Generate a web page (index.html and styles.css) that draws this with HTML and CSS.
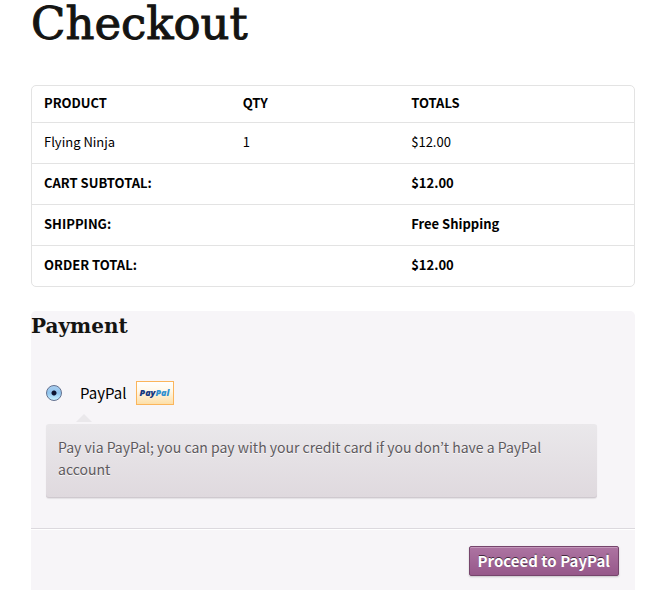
FILE: index.html
```html
<!DOCTYPE html>
<html lang="en">
<head>
<meta charset="UTF-8">
<title>Checkout</title>
<link rel="stylesheet" href="styles.css">
</head>
<body>
  <main class="checkout">
    <h1 class="page-title">Checkout</h1>

    <div class="order">
      <table class="order-table">
        <thead>
          <tr>
            <th class="col-product">Product</th>
            <th class="col-qty">Qty</th>
            <th>Totals</th>
          </tr>
        </thead>
        <tbody>
          <tr>
            <td>Flying Ninja</td>
            <td>1</td>
            <td>$12.00</td>
          </tr>
        </tbody>
        <tfoot>
          <tr>
            <th colspan="2">Cart Subtotal:</th>
            <td>$12.00</td>
          </tr>
          <tr>
            <th colspan="2">Shipping:</th>
            <td>Free Shipping</td>
          </tr>
          <tr>
            <th colspan="2">Order Total:</th>
            <td>$12.00</td>
          </tr>
        </tfoot>
      </table>
    </div>

    <form class="payment">
      <h2 class="payment-title">Payment</h2>
      <div class="methods">
        <div class="method">
          <input type="radio" class="radio" id="paypal" name="payment_method" value="paypal" checked>
          <label class="method-label" for="paypal">
            PayPal
            <span class="paypal-logo" aria-hidden="true"><span class="pay">Pay</span><span class="pal">Pal</span></span>
          </label>
        </div>
        <div class="payment-box">Pay via PayPal; you can pay with your credit card if you don’t have a PayPal account</div>
      </div>
      <div class="place-order">
        <button type="submit" class="button">Proceed to PayPal</button>
      </div>
    </form>
  </main>
</body>
</html>
```

FILE: styles.css
```css
* {
  box-sizing: border-box;
}

body {
  margin: 0;
  background: #fff;
  color: #141412;
  font-family: "Noto Sans CJK KR", "Open Sans", sans-serif;
}

.checkout {
  padding: 0 30px 0 31px;
}

.page-title {
  margin: 0 0 37px;
  font-family: "DejaVu Serif", serif;
  font-size: 45px;
  font-weight: 400;
  line-height: 48px;
  -webkit-text-stroke: 1px #141412;
}

/* order table */
.order {
  border: 1px solid #e3e3e3;
  border-radius: 5px;
}

.order-table {
  width: 100%;
  border-spacing: 0;
  table-layout: fixed;
  font-size: 13px;
  line-height: 20px;
  color: #000;
}

.order-table th,
.order-table td {
  padding: 9px 12px 11px;
  text-align: left;
  border-top: 1px solid #e3e3e3;
}

.order-table th {
  font-weight: 700;
  text-transform: uppercase;
}

.order-table thead th {
  padding: 7px 12px 9px;
  border-top: 0;
}

.order-table tfoot td {
  font-weight: 700;
}

.col-product {
  width: 33%;
}

.col-qty {
  width: 28%;
}

/* payment */
.payment {
  margin-top: 24px;
  background: #f7f5f8;
  border-radius: 5px 5px 0 0;
}

.payment-title {
  margin: 0;
  font-family: "DejaVu Serif", serif;
  font-size: 20px;
  font-weight: 700;
  line-height: 30px;
}

.methods {
  padding: 40px 38px 30px 15px;
  border-bottom: 1px solid #dcd9de;
}

.method {
  display: flex;
  align-items: center;
  gap: 18px;
  height: 24px;
}

.radio {
  appearance: none;
  width: 16px;
  height: 16px;
  margin: 0;
  border: 1px solid #62708f;
  border-radius: 50%;
  background: radial-gradient(circle, #0d1430 0 2px, transparent 3px), linear-gradient(#a9cdee, #8fc4ee 50%, #c9f2ff);
}

.method-label {
  display: flex;
  align-items: center;
  gap: 9px;
  color: #000;
  font-size: 15px;
  line-height: 24px;
}

.paypal-logo {
  width: 38px;
  height: 24px;
  border: 1px solid #fbb55c;
  background: linear-gradient(#fff, #fff8ea 40%, #fddfa8);
  font-family: "Open Sans", sans-serif;
  font-size: 9px;
  font-style: italic;
  font-weight: 800;
  line-height: 22px;
  text-align: center;
}

.pay {
  color: #14377f;
}

.pal {
  color: #2d8fd0;
}

.payment-box {
  position: relative;
  margin-top: 19px;
  padding: 12px 12px 18px;
  border-radius: 3px;
  background: linear-gradient(#eae8eb, #dfd9de);
  box-shadow: inset 0 -1px 0 #cfc9cf, 0 1px 1px rgba(0, 0, 0, 0.08);
  color: #5e5a5e;
  font-size: 14px;
  line-height: 22px;
  text-shadow: 0 1px 0 rgba(255, 255, 255, 0.8);
}

.payment-box::before {
  content: "";
  position: absolute;
  top: -10px;
  left: 30px;
  border: 8px solid transparent;
  border-top: 0;
  border-bottom-color: #eae8eb;
}

.place-order {
  display: flex;
  justify-content: flex-end;
  padding: 16px 16px 14px;
  border-top: 1px solid #fff;
}

.button {
  height: 30px;
  padding: 0 8px;
  border: 1px solid #76456c;
  border-radius: 2px;
  background: linear-gradient(#ad74a2, #96588a);
  box-shadow: inset 0 1px 0 #c497bb, 0 1px 2px rgba(0, 0, 0, 0.2);
  color: #fff;
  font-family: inherit;
  font-size: 15px;
  font-weight: 700;
  line-height: 28px;
  text-shadow: 0 -1px 0 rgba(0, 0, 0, 0.6);
  cursor: pointer;
}
```
